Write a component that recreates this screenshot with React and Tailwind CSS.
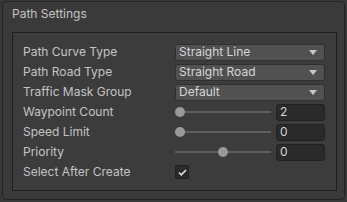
import React from 'react'

const font = { fontFamily: 'Inter, "Noto Sans", "Liberation Sans", sans-serif' }

function Dropdown({ value }) {
  return (
    <div className="flex h-[17px] w-[150px] items-center justify-between rounded-[3px] border border-[#303030] bg-[#515151] pl-[3px] pr-[7px] text-[12px] text-[#d6d6d6]">
      <span className="leading-none">{value}</span>
      <svg width="8" height="5" viewBox="0 0 8 5">
        <path d="M0 0H8L4 5Z" fill="#c8c8c8" />
      </svg>
    </div>
  )
}

function Slider({ value, pos }) {
  return (
    <div className="flex items-center gap-[5px]">
      <div className="relative h-[12px] w-[96px]">
        <div className="absolute left-0 right-0 top-[5px] h-[2px] bg-[#5e5e5e]" />
        <div
          className="absolute top-[1px] h-[10px] w-[10px] rounded-full bg-[#999999]"
          style={{ left: pos }}
        />
      </div>
      <div className="flex h-[17px] w-[49px] items-center rounded-[3px] border border-[#212121] bg-[#2a2a2a] pl-[3px] text-[12px] text-[#d4d4d4]">
        <span className="leading-none">{value}</span>
      </div>
    </div>
  )
}

function Row({ label, children }) {
  return (
    <div className="flex h-[20px] items-center">
      <div className="w-[152px] text-[12px] text-[#c4c4c4]">{label}</div>
      {children}
    </div>
  )
}

export default function App() {
  return (
    <div className="h-[202px] w-[347px] bg-[#383838] pl-[2px] pr-[2px] pt-[1px]" style={font}>
      <div className="h-[199px] rounded-[4px] border border-[#232323] bg-[#3a3a3a] pl-[9px] pr-[7px] pt-[3px]">
        <div className="h-[27px] text-[12px] leading-[17px] text-[#c4c4c4]">Path Settings</div>
        <div className="h-[159px] border border-[#1e1e1e] bg-[#3c3c3c] pl-[10px] pt-[9px]">
          <Row label="Path Curve Type">
            <Dropdown value="Straight Line" />
          </Row>
          <Row label="Path Road Type">
            <Dropdown value="Straight Road" />
          </Row>
          <Row label="Traffic Mask Group">
            <Dropdown value="Default" />
          </Row>
          <Row label="Waypoint Count">
            <Slider value="2" pos={0} />
          </Row>
          <Row label="Speed Limit">
            <Slider value="0" pos={0} />
          </Row>
          <Row label="Priority">
            <Slider value="0" pos={43} />
          </Row>
          <Row label="Select After Create">
            <div className="flex h-[14px] w-[14px] items-center justify-center rounded-[2px] border border-[#212121] bg-[#2a2a2a]">
              <svg width="9" height="7" viewBox="0 0 9 7">
                <path d="M1 3.5L3.3 5.8L8 1" fill="none" stroke="#e0e0e0" strokeWidth="1.6" />
              </svg>
            </div>
          </Row>
        </div>
      </div>
    </div>
  )
}
